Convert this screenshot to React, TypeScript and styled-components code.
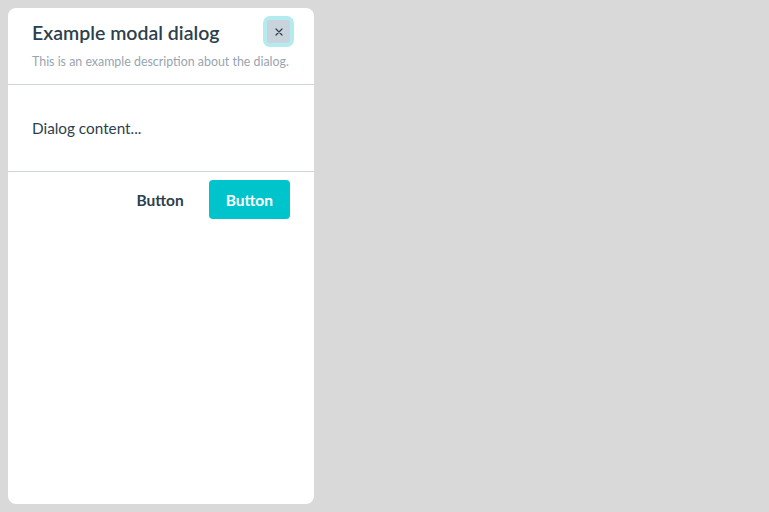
import React from "react";
import styled, { createGlobalStyle } from "styled-components";

const Global = createGlobalStyle`
  html, body { margin: 0; padding: 0; background: #d9d9d9; }
  body { font-family: "Source Sans Pro", Lato, "Noto Sans", sans-serif; }
  * { box-sizing: border-box; }
`;

const Page = styled.div`
  width: 769px;
  height: 512px;
  padding: 8px;
  display: flex;
  align-items: stretch;
`;

const Dialog = styled.div`
  width: 306px;
  height: 496px;
  background: #ffffff;
  border-radius: 8px;
  display: flex;
  flex-direction: column;
`;

const Header = styled.div`
  display: flex;
  flex-direction: column;
  padding: 8px 20px 14px 24px;
  border-bottom: 1px solid #ccd6df;
`;

const TitleRow = styled.div`
  display: flex;
  align-items: center;
  justify-content: space-between;
`;

const Title = styled.h2`
  margin: 0;
  font-size: 19.5px;
  line-height: 24px;
  font-weight: 600;
  color: #2d3f4c;
  padding-top: 2px;
`;

const Description = styled.p`
  margin: 7px 0 0;
  font-size: 12.4px;
  line-height: 16px;
  color: #97a4b0;
  white-space: nowrap;
`;

const CloseButton = styled.button`
  flex: 0 0 31px;
  width: 31px;
  height: 31px;
  border-radius: 7px;
  border: 4px solid #b3ebee;
  background: #c9d3dc;
  color: #2d3f4c;
  display: flex;
  align-items: center;
  justify-content: center;
  padding: 0;
  cursor: pointer;
`;

const Body = styled.div`
  padding: 32px 24px;
  font-size: 15.3px;
  line-height: 22px;
  color: #2d3f4c;
  border-bottom: 1px solid #ccd6df;
`;

const Footer = styled.div`
  display: flex;
  justify-content: flex-end;
  gap: 8px;
  padding: 8px 24px;
`;

const Btn = styled.button<{ $primary?: boolean }>`
  height: 39px;
  padding: 0 17px;
  border: none;
  border-radius: 4px;
  font-family: inherit;
  font-size: 15.5px;
  font-weight: 700;
  background: ${(p) => (p.$primary ? "#00c4cc" : "transparent")};
  color: ${(p) => (p.$primary ? "#ffffff" : "#2d3f4c")};
  cursor: pointer;
`;

export default function App() {
  return (
    <>
      <Global />
      <Page>
        <Dialog>
          <Header>
            <TitleRow>
              <Title>Example modal dialog</Title>
              <CloseButton aria-label="Close">
                <svg width="8" height="8" viewBox="0 0 8 8">
                  <path d="M1 1L7 7M7 1L1 7" stroke="#2d3f4c" strokeWidth="1.2" strokeLinecap="round" />
                </svg>
              </CloseButton>
            </TitleRow>
            <Description>This is an example description about the dialog.</Description>
          </Header>
          <Body>Dialog content...</Body>
          <Footer>
            <Btn>Button</Btn>
            <Btn $primary>Button</Btn>
          </Footer>
        </Dialog>
      </Page>
    </>
  );
}
